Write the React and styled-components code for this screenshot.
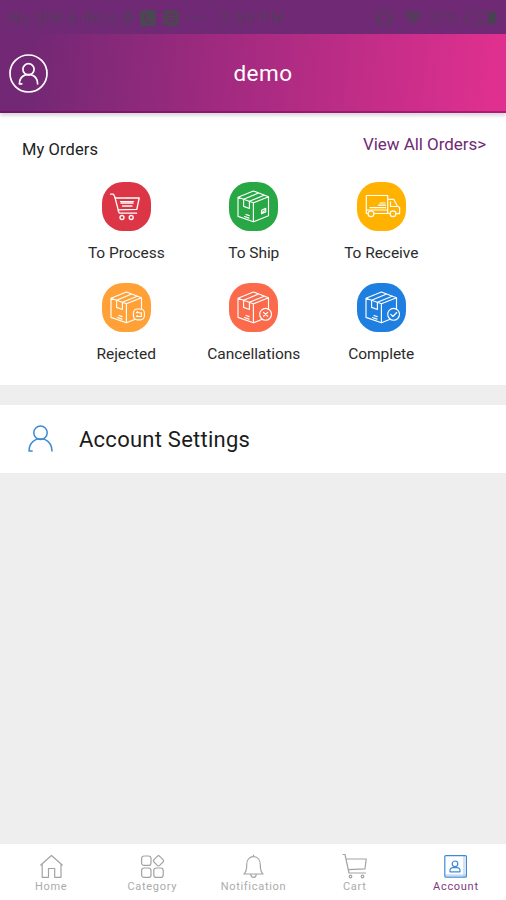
import styled, { createGlobalStyle } from "styled-components";

const GlobalStyle = createGlobalStyle`
  * {
    box-sizing: border-box;
  }
  body {
    margin: 0;
    background: #eeeeee;
    font-family: Roboto, "Liberation Sans", sans-serif;
  }
`;

const Screen = styled.div`
  display: flex;
  flex-direction: column;
  width: 100%;
  height: 100vh;
  overflow: hidden;
  background: #eeeeee;
`;

const StatusBar = styled.div`
  display: grid;
  grid-template-columns: 212px 1fr 205px;
  align-items: center;
  height: 34px;
  padding: 2px 8px 0 9px;
  background: #702974;
  color: #563c5c;
  font-size: 15px;
`;

const StatusGroup = styled.div`
  display: flex;
  align-items: center;
  gap: ${(props) => props.gap || "6px"};
  justify-content: ${(props) => props.align || "flex-start"};
  white-space: nowrap;
`;

const StatusText = styled.span`
  letter-spacing: ${(props) => props.spacing || "0.9px"};
  white-space: nowrap;
`;

const Header = styled.header`
  position: relative;
  z-index: 1;
  display: grid;
  grid-template-columns: 60px 1fr 40px;
  align-items: center;
  height: 79px;
  padding: 2px 9px 0;
  background: linear-gradient(95deg, #722874 6%, #a32a80 46%, #e0308f 98%);
  border-bottom: 2px solid rgba(120, 0, 90, 0.45);
  box-shadow: 0 3px 3px rgba(0, 0, 0, 0.14);
`;

const Title = styled.h1`
  margin: 0 0 2px;
  color: #fff;
  font-size: 22.5px;
  font-weight: 400;
  letter-spacing: 0.5px;
  text-align: center;
`;

const Orders = styled.section`
  height: 272px;
  background: #fff;
`;

const OrdersTop = styled.div`
  display: flex;
  justify-content: space-between;
  height: 69px;
  padding: 0 20px 0 22px;
`;

const OrdersTitle = styled.h2`
  margin: 27px 0 0;
  color: #222;
  font-size: 16.5px;
  font-weight: 400;
  line-height: 20px;
  letter-spacing: 0.1px;
`;

const ViewAll = styled.a`
  margin-top: 21px;
  color: #702974;
  font-size: 17px;
  line-height: 20px;
  letter-spacing: -0.05px;
`;

const OrderGrid = styled.div`
  display: grid;
  grid-template-columns: repeat(3, 127.5px);
  grid-auto-rows: 101px;
  justify-content: center;
  padding-left: 1.5px;
`;

const OrderItem = styled.div`
  display: flex;
  flex-direction: column;
  align-items: center;
`;

const OrderIcon = styled.div`
  width: 49px;
  height: 49px;
  border-radius: 21px;
  background: ${(props) => props.bg};
`;

const OrderLabel = styled.span`
  margin-top: 12px;
  color: #2b2b2b;
  font-size: 15.5px;
  line-height: 20px;
  letter-spacing: -0.05px;
  white-space: nowrap;
`;

const SettingsRow = styled.div`
  display: flex;
  align-items: center;
  height: 68px;
  margin-top: 20px;
  padding-left: 27px;
  background: #fff;
`;

const SettingsText = styled.span`
  margin-left: 24px;
  color: #1c1c1c;
  font-size: 22px;
  letter-spacing: 0.25px;
`;

const TabBar = styled.nav`
  display: grid;
  grid-template-columns: repeat(5, 1fr);
  height: 56px;
  margin-top: auto;
  background: #fff;
`;

const Tab = styled.div`
  display: flex;
  flex-direction: column;
  align-items: center;
  padding-top: 9px;
  padding-left: 1px;
  color: ${(props) => (props.active ? "#3f8ad6" : "#a3a3a3")};
`;

const TabLabel = styled.span`
  color: ${(props) => (props.active ? "#7d3a80" : "#ababab")};
  font-size: 11px;
  line-height: 13px;
  letter-spacing: 0.7px;
`;

const Line = styled.svg`
  display: block;
  flex: none;
  fill: none;
  stroke: currentColor;
  stroke-width: ${(props) => props.weight || 1.3};
  stroke-linecap: round;
  stroke-linejoin: round;
`;

const WhiteLine = styled(Line)`
  color: #fff;
`;

const BlueLine = styled(Line)`
  color: #3f8ad6;
`;

function CartIcon() {
  return (
    <WhiteLine width="49" height="49" viewBox="0 0 49 49" weight={1.3}>
      <path d="M8.5 12.2h2.8l1.4 2.3 3.5 13.3M12.8 16h24.4l-2.4 11.4-18.8.5 1.2 3.2h17.5" />
      <path d="M18.5 19.6h13M19 21.2h12M20.5 24h9.5" />
      <circle cx="20" cy="35.5" r="2" />
      <circle cx="29.2" cy="35.5" r="2" />
    </WhiteLine>
  );
}

function TruckIcon() {
  return (
    <WhiteLine width="49" height="49" viewBox="0 0 49 49" weight={1.2}>
      <path d="M11 31.5H9.3V13.5h21.4v18H17M30.7 17.3h6l3.6 6.7 2.3 1.6v6h-3.3M33 31.5h-2.3M33.5 19.8v4.7h6.2" />
      <path d="M9.5 28h21M23 21h5M21.5 23.2h7M13 25.6h15.5" />
      <circle cx="14" cy="31.8" r="2.9" />
      <circle cx="36" cy="31.8" r="2.9" />
    </WhiteLine>
  );
}

// same parcel for every status, the badge sits on its lower right corner
function BoxIcon({ badge, bg }) {
  return (
    <WhiteLine width="49" height="49" viewBox="0 0 49 49" weight={1.15}>
      <path d="M24.4 9 39.5 14.8 24.4 20.8 9 15.2zM9 15.2v19.2l15.4 5.4V20.8M24.4 39.8l15.1-6V14.8" />
      <path d="M14.6 17.2v7.2l5.8 2.1v-7.2M14.6 17.2 29 11.2M20.4 19.3l14.8-6" />
      <path d="M15.5 34.5l4.5 1.6M17 32.5l3.2 1.1" />
      {!badge && <path d="M32.5 28.2l4.2-1.8v3.6l-4.2 1.8zM33.5 30.3l2-1.5" />}
      {badge && badge !== "return" && <circle cx="36.6" cy="31.3" r="5.9" fill={bg} />}
      {badge === "return" && (
        <>
          <rect x="31.4" y="26" width="11" height="10.8" rx="4" fill={bg} />
          <path d="M34.4 29.7h4.9v3.8h-4.9M34.4 29.7l1.2-1M34.4 33.5l1.2-1" />
        </>
      )}
      {badge === "cancel" && <path d="M34.5 29.4l4.2 3.8M38.7 29.4l-4.2 3.8" />}
      {badge === "check" && <path d="M33.8 31.4l2.1 2.1 3.8-4" />}
    </WhiteLine>
  );
}

function ProfileIcon() {
  return (
    <WhiteLine width="39" height="39" viewBox="0 0 39 39" weight={1.7}>
      <circle cx="19.5" cy="19.5" r="18.5" />
      <circle cx="19.5" cy="15.3" r="5.6" />
      <path d="M12.8 29.8h-2.4c0-5.2 3-8.2 6.6-9.2h5c3.6 1 6.6 4 6.6 9.2" />
    </WhiteLine>
  );
}

function UserIcon() {
  return (
    <BlueLine width="28" height="28" viewBox="0 0 28 28" weight={1.5}>
      <circle cx="13.5" cy="7.8" r="6.7" />
      <path d="M5.2 26H2c0-5.4 2.7-9.6 7.7-11.9M17.3 14.1c5 2.3 7.7 6.5 7.7 11.9M9.7 14.1h7.6" />
    </BlueLine>
  );
}

const tabs = [
  {
    label: "Home",
    icon: <path d="M3.2 11.5V24.3h6.3v-8.8h6.2v8.8h6.3V11.5M1.8 12 12.5 2.5 23.2 12" />,
  },
  {
    label: "Category",
    icon: (
      <>
        <rect x="1.6" y="3" width="9.4" height="9.4" rx="2.5" />
        <path d="M17.3 3.3q1.2-1.2 2.4 0l3.3 3.3q1.2 1.2 0 2.4l-3.3 3.3q-1.2 1.2-2.4 0l-3.3-3.3q-1.2-1.2 0-2.4z" />
        <rect x="1.6" y="15" width="9.4" height="9.4" rx="2.5" />
        <rect x="13.8" y="15" width="9.4" height="9.4" rx="2.5" />
      </>
    ),
  },
  {
    label: "Notification",
    icon: (
      <path d="M12.5 2v1.6M3 21c2-1.8 2.7-3.4 2.7-9 0-5.3 2.8-8.4 6.8-8.4s6.8 3.1 6.8 8.4c0 5.6.7 7.2 2.7 9zM9.8 21.5c.3 3.9 5.1 3.9 5.4 0" />
    ),
  },
  {
    label: "Cart",
    icon: (
      <>
        <path d="M1 1.5h2l4 18.5h16.5M4.2 6h20l-1.2 9.8-16.4.8" />
        <circle cx="8.5" cy="23.5" r="1.3" />
        <circle cx="20.5" cy="23.5" r="1.3" />
      </>
    ),
  },
  {
    label: "Account",
    active: true,
    icon: (
      <>
        <rect x="1.8" y="2.6" width="21.6" height="21.6" rx="1" />
        <path d="M21 3v21M2 22.2h21" opacity="0.4" />
        <circle cx="12" cy="10.8" r="2.8" />
        <path d="M7 18.8v-1.2c0-2 1.6-3 3.2-3h3.6c1.6 0 3.2 1 3.2 3v1.2z" />
      </>
    ),
  },
];

const orders = [
  { label: "To Process", bg: "#dc3545", icon: <CartIcon /> },
  { label: "To Ship", bg: "#28a745", icon: <BoxIcon /> },
  { label: "To Receive", bg: "#ffb300", icon: <TruckIcon /> },
  { label: "Rejected", bg: "#ffa136", icon: <BoxIcon badge="return" bg="#ffa136" /> },
  { label: "Cancellations", bg: "#fb6a4b", icon: <BoxIcon badge="cancel" bg="#fb6a4b" /> },
  { label: "Complete", bg: "#1e7fe0", icon: <BoxIcon badge="check" bg="#1e7fe0" /> },
];

function PhoneStatus() {
  return (
    <StatusBar>
      <StatusGroup gap="3px">
        <StatusText>No SIM 6.4K/s</StatusText>
        <Line width="14" height="18" viewBox="0 0 14 18" weight={1.8}>
          <path d="M7 2v14M4.5 4.5 7 2l2.5 2.5M2 7v3l5 3M12 6v3l-5 3" />
        </Line>
        <svg width="68" height="18" viewBox="0 0 68 18">
          <rect x="2" y="1" width="16" height="16" rx="3" fill="#4d4653" />
          <path d="M7 5v5l5 4" stroke="#66306a" strokeWidth="1.5" fill="none" />
          <rect x="25" y="1" width="16" height="16" rx="4" fill="#524258" />
          <path d="M29 6h8M29 9h8M29 12h8" stroke="#66306a" strokeWidth="1.3" />
          <path d="M48 9h3M55 9h3M62 9h3" stroke="currentColor" strokeWidth="2" />
        </svg>
      </StatusGroup>
      <StatusText spacing="1.2px">2:55 PM</StatusText>
      <StatusGroup align="flex-end" gap="4px">
        <Line width="20" height="18" viewBox="0 0 20 18" weight={1.8}>
          <rect x="5" y="2" width="10" height="14" rx="3" />
          <path d="M2 6v6M18 6v6" />
        </Line>
        <svg width="27" height="16" viewBox="-4 0 27 16" fill="currentColor">
          <path d="M1 4q10-7 20 0L11 15z" />
          <path d="M2 7q9-6 18 0M5 10q6-4 12 0" fill="none" stroke="#66306a" />
        </svg>
        <StatusText spacing="0px">27%</StatusText>
        <svg width="37" height="16" viewBox="0 0 37 16" fill="none" stroke="currentColor">
          <rect x="6" y="2" width="29" height="12" rx="3" strokeWidth="1.3" />
          <path d="M3 6v4" strokeWidth="1.5" />
          <rect x="27" y="3" width="8" height="10" rx="2" fill="#454450" />
          <path d="M20 4l-4 4h6l-4 4" />
        </svg>
      </StatusGroup>
    </StatusBar>
  );
}

function App() {
  return (
    <Screen>
      <GlobalStyle />
      <PhoneStatus />
      <Header>
        <ProfileIcon />
        <Title>demo</Title>
      </Header>

      <Orders>
        <OrdersTop>
          <OrdersTitle>My Orders</OrdersTitle>
          <ViewAll>View All Orders&gt;</ViewAll>
        </OrdersTop>
        <OrderGrid>
          {orders.map((order) => (
            <OrderItem key={order.label}>
              <OrderIcon bg={order.bg}>{order.icon}</OrderIcon>
              <OrderLabel>{order.label}</OrderLabel>
            </OrderItem>
          ))}
        </OrderGrid>
      </Orders>

      <SettingsRow>
        <UserIcon />
        <SettingsText>Account Settings</SettingsText>
      </SettingsRow>

      <TabBar>
        {tabs.map((tab) => (
          <Tab key={tab.label} active={tab.active}>
            <Line width="25" height="27" viewBox="0 0 25 27" weight={1.2}>
              {tab.icon}
            </Line>
            <TabLabel active={tab.active}>{tab.label}</TabLabel>
          </Tab>
        ))}
      </TabBar>
    </Screen>
  );
}

export default App;
